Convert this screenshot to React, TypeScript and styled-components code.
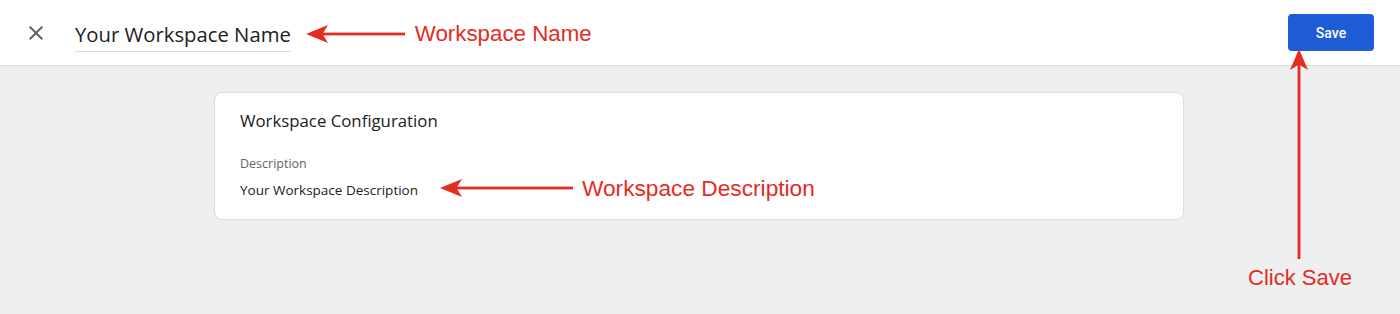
import React from 'react';
import styled, { createGlobalStyle } from 'styled-components';

const GlobalStyle = createGlobalStyle`
  html, body {
    margin: 0;
    padding: 0;
    background: #eeeff1;
    font-family: 'Open Sans', Roboto, Arial, sans-serif;
  }
`;

const RED = '#e42c1f';

const Page = styled.div`
  width: 1400px;
  height: 314px;
  display: flex;
  flex-direction: column;
  overflow: hidden;
`;

const Header = styled.header`
  height: 65px;
  flex-shrink: 0;
  display: flex;
  align-items: center;
  padding: 0 26px 0 24px;
  background: #ffffff;
  border-bottom: 1px solid #dadce0;
`;

const CloseButton = styled.button`
  width: 24px;
  height: 24px;
  padding: 0;
  border: none;
  background: none;
  color: #5f6368;
  display: flex;
  align-items: center;
  justify-content: center;
  cursor: pointer;
`;

const NameField = styled.div`
  margin-left: 27px;
  padding: 7px 0 3px;
  line-height: 28px;
  font-size: 20.3px;
  color: #202124;
  border-bottom: 1px solid #dadce0;
  white-space: nowrap;
`;

const Annotation = styled.div<{ $gap: number; $lift?: number }>`
  display: flex;
  align-items: center;
  margin-left: ${(p) => p.$gap}px;
  margin-bottom: ${(p) => (p.$lift ?? 0) * 2}px;
`;

const AnnotationLabel = styled.span<{ $gap: number; $size: number }>`
  margin-left: ${(p) => p.$gap}px;
  font-family: 'Liberation Sans', Arial, sans-serif;
  font-size: ${(p) => p.$size}px;
  line-height: 20px;
  color: ${RED};
  white-space: nowrap;
`;

const Spacer = styled.div`
  flex: 1;
`;

const SaveWrap = styled.div`
  position: relative;
`;

const SaveButton = styled.button`
  width: 86px;
  height: 37px;
  border: none;
  border-radius: 4px;
  background: #1d5bd7;
  color: #ffffff;
  font-family: Roboto, Arial, sans-serif;
  font-size: 14px;
  font-weight: 500;
  cursor: pointer;
`;

const ClickSaveNote = styled.div`
  position: absolute;
  top: 35px;
  left: -41px;
  width: 104px;
  display: flex;
  flex-direction: column;
  align-items: center;
  pointer-events: none;
`;

const ClickSaveLabel = styled.span`
  margin-top: 6px;
  font-family: 'Liberation Sans', Arial, sans-serif;
  font-size: 22px;
  line-height: 25px;
  color: ${RED};
  white-space: nowrap;
  padding-left: 2px;
`;

const Body = styled.main`
  flex: 1;
  display: flex;
  justify-content: center;
  padding: 26px 2px 0 0;
`;

const Card = styled.section`
  width: 970px;
  height: 128px;
  box-sizing: border-box;
  padding: 16px 25px 0;
  background: #ffffff;
  border: 1px solid #dadce0;
  border-radius: 8px;
`;

const CardTitle = styled.h2`
  margin: 0;
  font-size: 16.8px;
  font-weight: 400;
  line-height: 24px;
  color: #202124;
`;

const FieldLabel = styled.div`
  margin-top: 22px;
  font-size: 12.5px;
  line-height: 18px;
  color: #5f6368;
`;

const FieldRow = styled.div`
  margin-top: 7px;
  display: flex;
  align-items: center;
  height: 20px;
`;

const FieldValue = styled.span`
  font-size: 13.5px;
  line-height: 20px;
  color: #202124;
`;

const LeftArrow = ({ length }: { length: number }) => (
  <svg width={length} height="20" viewBox={`0 0 ${length} 20`}>
    <path d="M0 10 L22 1 L16.5 10 L22 19 Z" fill={RED} />
    <rect x="16" y="8.6" width={length - 16} height="2.8" fill={RED} />
  </svg>
);

const UpArrow = ({ length }: { length: number }) => (
  <svg width="20" height={length} viewBox={`0 0 20 ${length}`}>
    <path d="M10 0 L19 21 L10 15.5 L1 21 Z" fill={RED} />
    <rect x="8.6" y="15" width="2.8" height={length - 15} fill={RED} />
  </svg>
);

const CloseIcon = () => (
  <svg width="24" height="24" viewBox="0 0 24 24">
    <path
      d="M19 6.41L17.59 5 12 10.59 6.41 5 5 6.41 10.59 12 5 17.59 6.41 19 12 13.41 17.59 19 19 17.59 13.41 12z"
      fill="currentColor"
    />
  </svg>
);

export default function App() {
  return (
    <Page>
      <GlobalStyle />
      <Header>
        <CloseButton aria-label="Close">
          <CloseIcon />
        </CloseButton>
        <NameField>Your Workspace Name</NameField>
        <Annotation $gap={15} $lift={-1}>
          <LeftArrow length={99} />
          <AnnotationLabel $gap={10} $size={22.3}>
            Workspace Name
          </AnnotationLabel>
        </Annotation>
        <Spacer />
        <SaveWrap>
          <SaveButton>Save</SaveButton>
          <ClickSaveNote>
            <UpArrow length={210} />
            <ClickSaveLabel>Click Save</ClickSaveLabel>
          </ClickSaveNote>
        </SaveWrap>
      </Header>
      <Body>
        <Card>
          <CardTitle>Workspace Configuration</CardTitle>
          <FieldLabel>Description</FieldLabel>
          <FieldRow>
            <FieldValue>Your Workspace Description</FieldValue>
            <Annotation $gap={22} $lift={2}>
              <LeftArrow length={133} />
              <AnnotationLabel $gap={9} $size={22.7}>
                Workspace Description
              </AnnotationLabel>
            </Annotation>
          </FieldRow>
        </Card>
      </Body>
    </Page>
  );
}
